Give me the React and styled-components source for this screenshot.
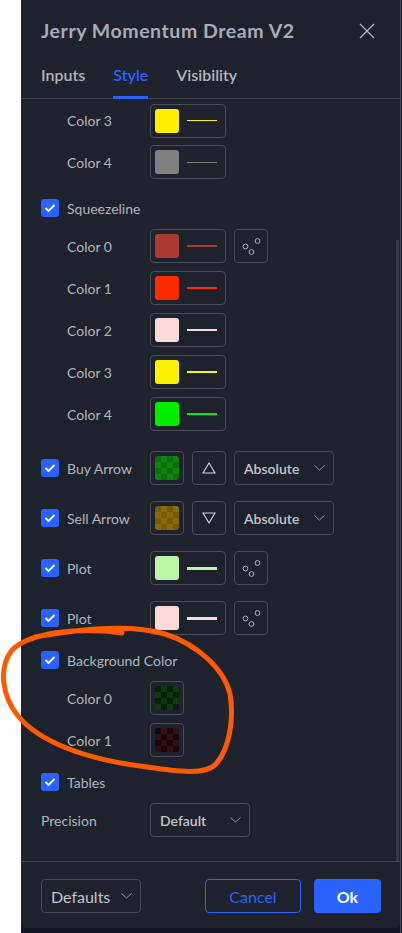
import React from "react";
import styled, { createGlobalStyle } from "styled-components";

const GlobalStyle = createGlobalStyle`
  body {
    margin: 0;
    background: #ffffff;
    font-family: Lato, "Open Sans", sans-serif;
  }
`;

const sections = [
  { type: "sub", label: "Color 3", color: "#ffee00", line: 1, h: 41 },
  { type: "sub", label: "Color 4", color: "#808080", line: 1 },
  { type: "check", label: "Squeezeline", mt: 8 },
  { type: "sub", label: "Color 0", color: "#ad3a30", line: 2, styleBtn: true },
  { type: "sub", label: "Color 1", color: "#ff2a00", line: 2 },
  { type: "sub", label: "Color 2", color: "#fadbd8", line: 2 },
  { type: "sub", label: "Color 3", color: "#fff200", line: 2 },
  { type: "sub", label: "Color 4", color: "#00ee00", line: 2 },
  { type: "arrow", label: "Buy Arrow", check: ["#0c850c", "#0a6e0a"], dir: "up", mt: 8 },
  { type: "arrow", label: "Sell Arrow", check: ["#8a6a0c", "#77590a"], dir: "down" },
  { type: "plot", label: "Plot", color: "#b9f7a6", line: 3 },
  { type: "plot", label: "Plot", color: "#fadbd8", line: 3 },
  { type: "check", label: "Background Color" },
  { type: "bg", label: "Color 0", check: ["#0d3a10", "#032103"] },
  { type: "bg", label: "Color 1", check: ["#2e1216", "#1a0406"] },
  { type: "check", label: "Tables", mt: 4 },
];

const Chevron = () => (
  <svg width="11" height="6" viewBox="0 0 11 6">
    <path d="M0.5 0.5 L5.5 5 L10.5 0.5" fill="none" stroke="#9598a1" strokeWidth="1" />
  </svg>
);

const Check = () => (
  <svg width="12" height="10" viewBox="0 0 12 10">
    <path d="M1.5 5 L4.5 8 L10.5 2" fill="none" stroke="#ffffff" strokeWidth="1.8" />
  </svg>
);

const Circles = () => (
  <svg width="20" height="18" viewBox="0 0 20 18">
    <circle cx="4.5" cy="9.5" r="2.4" fill="none" stroke="#b2b5be" strokeWidth="1" />
    <circle cx="10.5" cy="15" r="2.4" fill="none" stroke="#b2b5be" strokeWidth="1" />
    <circle cx="16.5" cy="4" r="2.4" fill="none" stroke="#b2b5be" strokeWidth="1" />
  </svg>
);

const Triangle = ({ dir }) => (
  <svg width="14" height="12" viewBox="0 0 14 12">
    {dir === "up" ? (
      <path d="M7 1 L13 11 L1 11 Z" fill="none" stroke="#d1d4dc" strokeWidth="1.1" />
    ) : (
      <path d="M1 1 L13 1 L7 11 Z" fill="none" stroke="#d1d4dc" strokeWidth="1.1" />
    )}
  </svg>
);

const renderRow = (s, i) => {
  if (s.type === "check") {
    return (
      <Row key={i} $h={34} $mt={s.mt}>
        <LabelCell>
          <Box><Check /></Box>
          {s.label}
        </LabelCell>
      </Row>
    );
  }
  if (s.type === "sub" || s.type === "bg") {
    return (
      <Row key={i} $h={s.h || 42} $mt={s.mt}>
        <LabelCell $indent>{s.label}</LabelCell>
        <Controls>
          {s.type === "sub" ? (
            <Swatch $wide>
              <Square $color={s.color} />
              <Line $color={s.color} $thick={s.line} />
            </Swatch>
          ) : (
            <Swatch>
              <Checker $a={s.check[0]} $b={s.check[1]} />
            </Swatch>
          )}
          {s.styleBtn && <IconBtn><Circles /></IconBtn>}
        </Controls>
      </Row>
    );
  }
  if (s.type === "arrow") {
    return (
      <Row key={i} $h={50} $mt={s.mt}>
        <LabelCell>
          <Box><Check /></Box>
          {s.label}
        </LabelCell>
        <Controls>
          <Swatch>
            <Checker $a={s.check[0]} $b={s.check[1]} />
          </Swatch>
          <IconBtn><Triangle dir={s.dir} /></IconBtn>
          <Select $w={100}>
            Absolute
            <Chevron />
          </Select>
        </Controls>
      </Row>
    );
  }
  return (
    <Row key={i} $h={50}>
      <LabelCell>
        <Box><Check /></Box>
        {s.label}
      </LabelCell>
      <Controls>
        <Swatch $wide>
          <Square $color={s.color} />
          <Line $color={s.color} $thick={s.line} />
        </Swatch>
        <IconBtn><Circles /></IconBtn>
      </Controls>
    </Row>
  );
};

const App = () => {
  return (
    <Page>
      <GlobalStyle />
      <Gutter />
      <Frame>
        <Panel>
          <Header>
            <Title>Jerry Momentum Dream V2</Title>
            <Close>
              <svg width="16" height="16" viewBox="0 0 16 16">
                <path d="M1 1 L15 15 M15 1 L1 15" stroke="#b2b5be" strokeWidth="1.3" />
              </svg>
            </Close>
          </Header>
          <Tabs>
            <Tab>Inputs</Tab>
            <Tab $active>Style</Tab>
            <Tab>Visibility</Tab>
          </Tabs>
          <Body>
            {sections.map(renderRow)}
            <Row $h={42}>
              <LabelCell>Precision</LabelCell>
              <Controls>
                <Select $w={100}>
                  Default
                  <Chevron />
                </Select>
              </Controls>
            </Row>
            <ScrollThumb />
          </Body>
          <Footer>
            <Select $w={100} $big>
              Defaults
              <Chevron />
            </Select>
            <Actions>
              <CancelBtn>Cancel</CancelBtn>
              <OkBtn>Ok</OkBtn>
            </Actions>
          </Footer>
        </Panel>
        <Edge />
      </Frame>
      <Scribble viewBox="0 0 402 933" width="402" height="933">
        <path
          d="M122 633 C 80 627, 30 632, 12 650 C -2 668, 2 696, 18 716 C 38 740, 80 758, 140 766 C 175 771, 205 776, 216 764 C 230 748, 234 718, 230 694 C 224 668, 196 644, 165 634 C 135 625, 90 627, 35 637"
          fill="none"
          stroke="#ff5a00"
          strokeWidth="5"
          strokeLinecap="round"
        />
      </Scribble>
    </Page>
  );
};

export default App;

const Page = styled.div`
  position: relative;
  display: flex;
  width: 402px;
  height: 933px;
  overflow: hidden;
`;

const Gutter = styled.div`
  width: 21px;
  background: #ffffff;
`;

const Frame = styled.div`
  flex: 1;
  display: flex;
  align-items: flex-start;
  background: #131722;
`;

const Panel = styled.div`
  width: 379px;
  height: 928px;
  display: flex;
  flex-direction: column;
  background: #1e222d;
  border-radius: 0 0 6px 6px;
`;

const Edge = styled.div`
  width: 2px;
  height: 100%;
  background: linear-gradient(90deg, #4a4e59 0 1px, #131722 1px);
`;

const Header = styled.div`
  height: 56px;
  display: flex;
  align-items: center;
  justify-content: space-between;
  padding: 5px 25px 0 20px;
  box-sizing: border-box;
`;

const Title = styled.div`
  font-size: 19.5px;
  font-weight: 700;
  letter-spacing: 0.55px;
  color: #a9acb5;
`;

const Close = styled.div`
  width: 16px;
  height: 16px;
  display: flex;
`;

const Tabs = styled.div`
  height: 43px;
  display: flex;
  gap: 28px;
  padding-left: 20px;
  border-bottom: 1px solid #434651;
  box-sizing: border-box;
`;

const Tab = styled.div`
  position: relative;
  display: flex;
  align-items: center;
  padding-bottom: 5px;
  font-size: 16px;
  font-weight: 600;
  color: ${(p) => (p.$active ? "#2962ff" : "#b2b5be")};

  &::after {
    content: "";
    display: ${(p) => (p.$active ? "block" : "none")};
    position: absolute;
    left: 0;
    right: 0;
    bottom: -1px;
    height: 3px;
    background: #2962ff;
  }
`;

const Body = styled.div`
  position: relative;
  height: 762px;
  overflow: hidden;
  padding: 1px 0 0 20px;
  box-sizing: border-box;
`;

const ScrollThumb = styled.div`
  position: absolute;
  right: 1px;
  top: 141px;
  width: 3px;
  bottom: 0;
  background: #363a45;
`;

const Row = styled.div`
  height: ${(p) => p.$h}px;
  margin-top: ${(p) => p.$mt || 0}px;
  display: flex;
  align-items: center;
`;

const LabelCell = styled.div`
  width: 109px;
  flex-shrink: 0;
  display: flex;
  align-items: center;
  gap: 8px;
  padding-left: ${(p) => (p.$indent ? 26 : 0)}px;
  box-sizing: border-box;
  font-size: 14px;
  color: #b2b5be;
  white-space: nowrap;
`;

const Box = styled.div`
  width: 18px;
  height: 18px;
  border-radius: 3px;
  background: #2962ff;
  display: flex;
  align-items: center;
  justify-content: center;
  flex-shrink: 0;
`;

const Controls = styled.div`
  display: flex;
  gap: 8px;
`;

const Swatch = styled.div`
  width: ${(p) => (p.$wide ? 76 : 34)}px;
  height: 34px;
  box-sizing: border-box;
  border: 1px solid #4a4d57;
  border-radius: 4px;
  display: flex;
  align-items: center;
  padding-left: 4px;
`;

const Square = styled.div`
  width: 24px;
  height: 24px;
  border-radius: 3px;
  background: ${(p) => p.$color};
`;

const Checker = styled.div`
  width: 24px;
  height: 24px;
  border-radius: 3px;
  background: repeating-conic-gradient(${(p) => p.$a} 0 25%, ${(p) => p.$b} 0 50%) 0 0 / 12px 12px;
`;

const Line = styled.div`
  width: 30px;
  height: ${(p) => p.$thick}px;
  margin-left: 8px;
  background: ${(p) => p.$color};
`;

const IconBtn = styled.div`
  width: 34px;
  height: 34px;
  box-sizing: border-box;
  border: 1px solid #4a4d57;
  border-radius: 4px;
  display: flex;
  align-items: center;
  justify-content: center;
`;

const Select = styled.div`
  width: ${(p) => p.$w}px;
  height: 34px;
  box-sizing: border-box;
  border: 1px solid #4a4d57;
  border-radius: 4px;
  display: flex;
  align-items: center;
  justify-content: space-between;
  padding: 0 8px 0 9px;
  font-size: ${(p) => (p.$big ? 16 : 14)}px;
  font-weight: ${(p) => (p.$big ? 400 : 600)};
  color: #c3c6ce;
`;

const Footer = styled.div`
  flex: 1;
  border-top: 1px solid #434651;
  display: flex;
  align-items: flex-start;
  justify-content: space-between;
  padding: 17px 19px 0 20px;
`;

const Actions = styled.div`
  display: flex;
  gap: 13px;
`;

const CancelBtn = styled.div`
  width: 96px;
  height: 34px;
  box-sizing: border-box;
  border: 1px solid #2962ff;
  border-radius: 4px;
  display: flex;
  align-items: center;
  justify-content: center;
  font-size: 16px;
  color: #2962ff;
`;

const OkBtn = styled.div`
  width: 67px;
  height: 34px;
  border-radius: 4px;
  background: #2962ff;
  display: flex;
  align-items: center;
  justify-content: center;
  font-size: 16px;
  font-weight: 700;
  color: #ffffff;
`;

const Scribble = styled.svg`
  position: absolute;
  left: 0;
  top: 0;
  pointer-events: none;
`;
